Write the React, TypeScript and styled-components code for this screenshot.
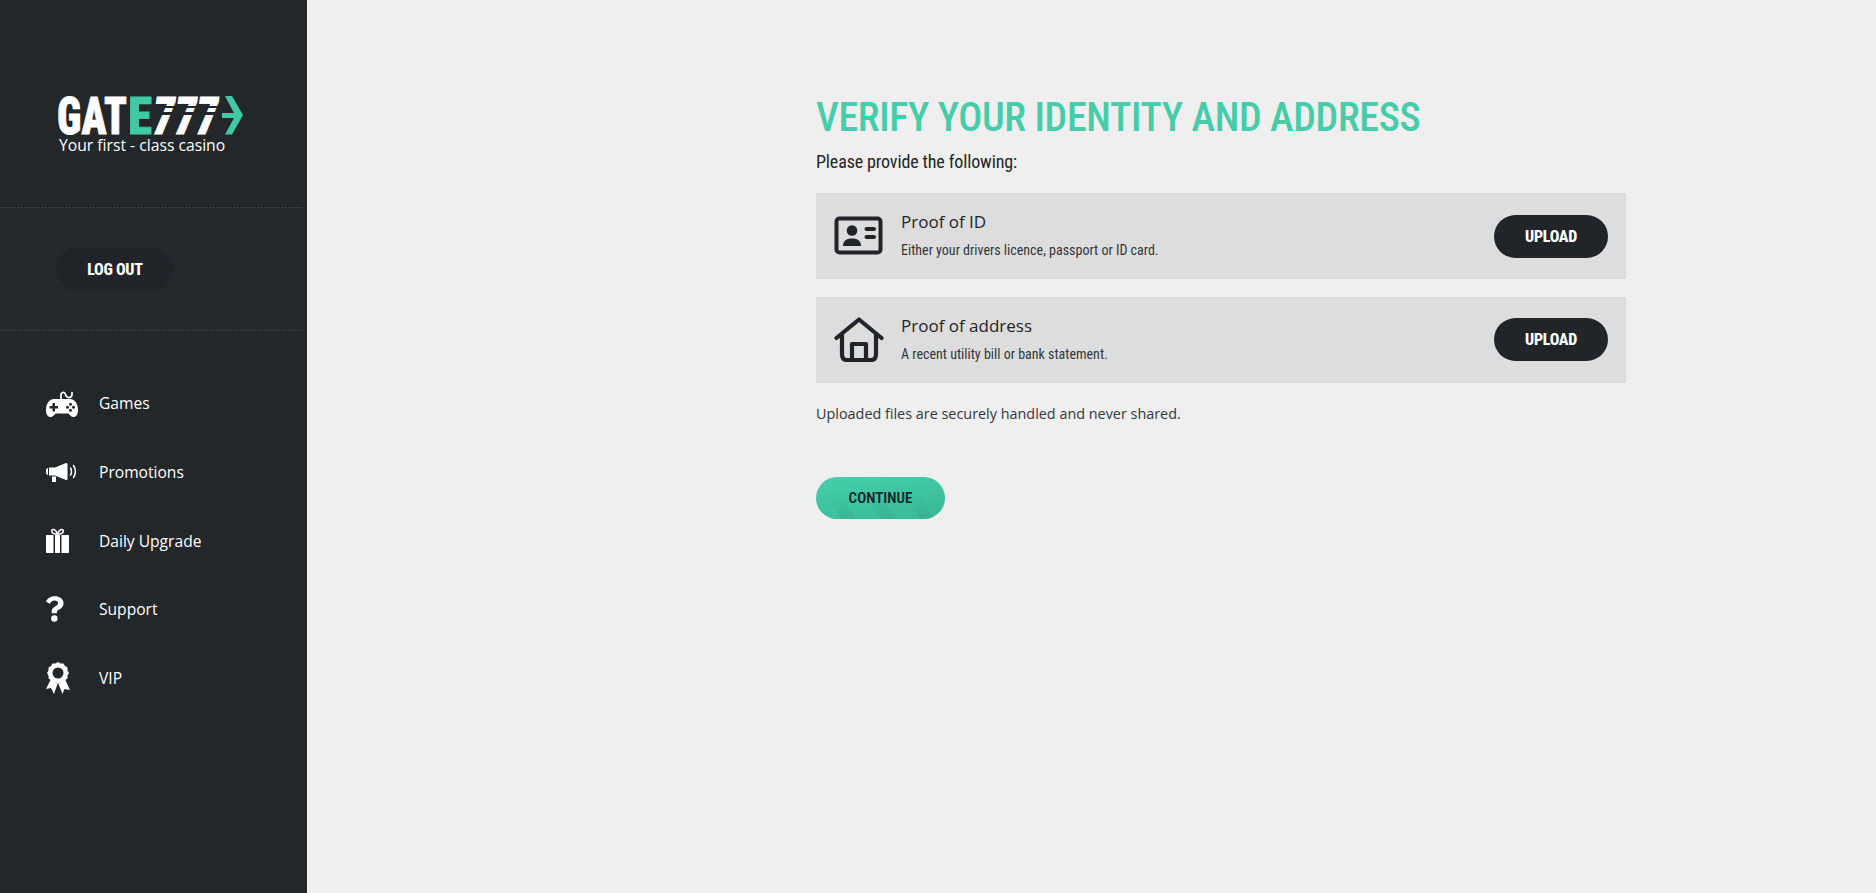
import { ReactNode } from 'react';
import styled, { createGlobalStyle } from 'styled-components';

const GlobalStyle = createGlobalStyle`
	html, body {
		margin: 0;
		padding: 0;
		height: 100%;
		background: #efefef;
		font-family: 'Open Sans', 'Noto Sans', sans-serif;
	}
	* {
		box-sizing: border-box;
	}
`;

const GamesIcon = () => (
	<svg width='32' height='27' viewBox='0 0 32 27' fill='none'>
		<path d='M15 9V4.500C15 2.500 18 1.500 19 3.500C20 6 20 7 22 7.500C24 7.800 26 7 26 4.500V2.500' stroke='#fff' strokeWidth='1.700' strokeLinecap='round' />
		<path
			fill='#fff'
			fillRule='evenodd'
			d='M8 9H24C29 9 32 14 32 20C32 24.500 30 27 27.500 27C25 27 24 25 22.500 23.500H9.500C8 25 7 27 4.500 27C2 27 0 24.500 0 20C0 14 3 9 8 9ZM6.500 13V16H3.500V18.500H6.500V21.500H9V18.500H12V16H9V13ZM24.500 12.700A1.500 1.500 0 1 0 24.500 15.700A1.500 1.500 0 1 0 24.500 12.700ZM24.500 18.700A1.500 1.500 0 1 0 24.500 21.700A1.500 1.500 0 1 0 24.500 18.700ZM21.500 15.700A1.500 1.500 0 1 0 21.500 18.700A1.500 1.500 0 1 0 21.500 15.700ZM27.500 15.700A1.500 1.500 0 1 0 27.500 18.700A1.500 1.500 0 1 0 27.500 15.700Z'
		/>
	</svg>
);

const PromotionsIcon = () => (
	<svg width='31' height='19' viewBox='0 0 31 19' fill='none'>
		<path fill='#fff' d='M0 7.500C0 6 1 5 2 5V12C1 12 0 11 0 9.500ZM3 4.500H9L20 0C21 0 21.500 0.500 21.500 1.500V15.500C21.500 16.500 21 17 20 17L9 12.500H3ZM6 13.500H10V19H6Z' />
		<path d='M24.500 5C25.800 6.800 25.800 10.200 24.500 12M27.500 2.500C30 6 30 11 27.500 14.500' stroke='#fff' strokeWidth='1.500' strokeLinecap='round' />
	</svg>
);

const GiftIcon = () => (
	<svg width='23' height='25' viewBox='0 0 23 25' fill='none'>
		<path d='M11.500 6C9 6 5.500 5.500 5.700 3C6 0.500 9.500 0.800 11.500 6C13.500 0.800 17 0.500 17.300 3C17.500 5.500 14 6 11.500 6Z' stroke='#fff' strokeWidth='1.600' />
		<path fill='#fff' d='M0.500 7H7.500V25H1.500C0.500 25 0 24.500 0 23.500V7.500C0 7.200 0.200 7 0.500 7ZM9 7H14V25H9ZM15.500 7H22.500C22.800 7 23 7.200 23 7.500V23.500C23 24.500 22.500 25 21.500 25H15.500Z' />
	</svg>
);

const SupportIcon = () => (
	<svg width='18' height='26' viewBox='0 0 19 27' fill='#fff'>
		<path d='M9.500 0C4.500 0 1.500 2.500 0 5.500L4 8C5 6 6.500 4.500 9 4.500C11 4.500 12.800 5.500 12.800 7.300C12.800 9 11.300 9.700 9.500 10.800C7.500 12 6 13.300 6 16V18H11.500V16.800C11.500 15.500 12.500 14.800 14 13.900C16.500 12.500 18.500 10.700 18.500 7.300C18.500 2.700 14 0 9.500 0Z' />
		<circle cx='8.800' cy='23.500' r='3.400' />
	</svg>
);

const VipIcon = () => (
	<svg width='24' height='32' viewBox='0 0 24 32' fill='none'>
		<path fill='#fff' d='M5 17L0 27L5 26L8 32L11.500 22ZM19 17L24 28L18.500 27L16.500 32L12.500 22Z' />
		<path
			fill='#fff'
			fillRule='evenodd'
			d='M12 0L14.600 1.500L17.500 1.500L19 4L21.500 5.500L21.500 8.500L23 11L21.500 13.500L21.500 16.500L19 18L17.500 20.500L14.600 20.500L12 22L9.400 20.500L6.500 20.500L5 18L2.500 16.500L2.500 13.500L1 11L2.500 8.500L2.500 5.500L5 4L6.500 1.500L9.400 1.500ZM12 5.500A5.500 5.500 0 1 0 12 16.500A5.500 5.500 0 1 0 12 5.500Z'
		/>
	</svg>
);

const IdCardIcon = () => (
	<svg width='50' height='40' viewBox='0 0 50 40' fill='none'>
		<rect x='2.500' y='2.500' width='44' height='34' rx='3' stroke='#212529' strokeWidth='4' />
		<circle cx='18' cy='14.500' r='5.300' fill='#212529' />
		<path d='M9 30C9 25 12 22.500 18 22.500C24 22.500 27 25 27 30Z' fill='#212529' />
		<path d='M32.500 13H40M32.500 21H40' stroke='#212529' strokeWidth='4' strokeLinecap='round' />
	</svg>
);

const HouseIcon = () => (
	<svg width='50' height='45' viewBox='0 0 50 45' fill='none' stroke='#212529' strokeWidth='4.200' strokeLinecap='round' strokeLinejoin='round'>
		<path d='M2.500 21L25 2.500L47.500 21' />
		<path d='M8 17V37C8 41 10 43 13 43H37C40 43 42 41 42 37V17' />
		<path d='M18 43V27H32V43' />
	</svg>
);

const LogoMark = () => (
	<LogoSvg width='186' height='39' viewBox='0 0 186 39'>
		<LogoLetters x='-1' y='38' textLength='70' lengthAdjust='spacingAndGlyphs' fill='#ffffff' stroke='#ffffff'>
			GAT
		</LogoLetters>
		<LogoLetters x='70' y='38' textLength='24' lengthAdjust='spacingAndGlyphs' fill='#3fcaa5' stroke='#3fcaa5'>
			E
		</LogoLetters>
		<LogoLetters x='95' y='38' textLength='65' lengthAdjust='spacingAndGlyphs' fill='#ffffff' stroke='#ffffff' $italic>
			777
		</LogoLetters>
		<rect x='94' y='10' width='70' height='2' fill='#23272a' />
		<rect x='94' y='16' width='70' height='3' fill='#23272a' />
		<path d='M167 0H174L185 19L174 38.500H167L176 22H164V17H176Z' fill='#3fcaa5' />
	</LogoSvg>
);

const menu: { label: string; icon: ReactNode }[] = [
	{ label: 'Games', icon: <GamesIcon /> },
	{ label: 'Promotions', icon: <PromotionsIcon /> },
	{ label: 'Daily Upgrade', icon: <GiftIcon /> },
	{ label: 'Support', icon: <SupportIcon /> },
	{ label: 'VIP', icon: <VipIcon /> },
];

const App = () => {
	return (
		<Page>
			<GlobalStyle />
			<Sidebar>
				<Logo>
					<LogoMark />
					<LogoTagline>Your first - class casino</LogoTagline>
				</Logo>
				<Account>
					<LogOut>LOG OUT</LogOut>
				</Account>
				<Menu>
					{menu.map((item) => (
						<MenuItem key={item.label}>
							<MenuIcon>{item.icon}</MenuIcon>
							{item.label}
						</MenuItem>
					))}
				</Menu>
			</Sidebar>
			<Main>
				<Title>VERIFY YOUR IDENTITY AND ADDRESS</Title>
				<Intro>Please provide the following:</Intro>
				<Row>
					<RowIcon>
						<IdCardIcon />
					</RowIcon>
					<RowText>
						<RowTitle>Proof of ID</RowTitle>
						<RowHint>Either your drivers licence, passport or ID card.</RowHint>
					</RowText>
					<Upload>UPLOAD</Upload>
				</Row>
				<Row>
					<RowIcon>
						<HouseIcon />
					</RowIcon>
					<RowText>
						<RowTitle>Proof of address</RowTitle>
						<RowHint>A recent utility bill or bank statement.</RowHint>
					</RowText>
					<Upload>UPLOAD</Upload>
				</Row>
				<Note>Uploaded files are securely handled and never shared.</Note>
				<Continue>CONTINUE</Continue>
			</Main>
		</Page>
	);
};

export default App;

const Page = styled.div`
	display: flex;
	height: 893px;
	overflow: hidden;
`;

const Sidebar = styled.aside`
	width: 307px;
	flex-shrink: 0;
	background-color: #23272a;
`;

const Logo = styled.div`
	height: 207px;
	padding: 96px 0 0 58px;
`;

const LogoSvg = styled.svg`
	display: block;
	overflow: visible;
`;

const LogoLetters = styled.text<{ $italic?: boolean }>`
	font-family: 'Roboto', sans-serif;
	font-stretch: 75%;
	font-weight: 900;
	font-size: 52px;
	font-style: ${(p) => (p.$italic ? 'italic' : 'normal')};
	stroke-width: 0.8px;
`;

const LogoTagline = styled.div`
	margin: 0 0 0 1px;
	font-size: 15.7px;
	line-height: 20px;
	white-space: nowrap;
	color: #ffffff;
`;

const Account = styled.div`
	width: 303px;
	height: 124px;
	padding: 40px 0 0 56px;
	background-color: #25292c;
	background-image: repeating-linear-gradient(90deg, #53575a 0 1px, transparent 1px 3px),
		repeating-linear-gradient(90deg, #53575a 0 1px, transparent 1px 3px),
		repeating-linear-gradient(180deg, #34383b 0 1px, transparent 1px 3px);
	background-size: 100% 1px, 100% 1px, 1px 100%;
	background-position: top left, bottom left, top right;
	background-repeat: no-repeat;
`;

const LogOut = styled.button`
	display: block;
	width: 118px;
	height: 44px;
	border: 0;
	border-radius: 22px;
	background-color: #212428;
	color: #ffffff;
	font-family: 'Roboto', sans-serif;
	font-stretch: 75%;
	font-weight: 800;
	font-size: 16px;
	letter-spacing: -0.3px;
`;

const Menu = styled.nav`
	display: flex;
	flex-direction: column;
	padding-top: 38px;
`;

const MenuItem = styled.a`
	display: flex;
	align-items: center;
	height: 68.7px;
	padding-left: 46px;
	font-size: 15.6px;
	color: #ffffff;
`;

const MenuIcon = styled.span`
	display: flex;
	align-items: center;
	width: 53px;
`;

const Main = styled.main`
	flex: 1;
	padding: 92px 250px 0 509px;
`;

const Title = styled.h1`
	margin: 0;
	font-family: 'Roboto', sans-serif;
	font-stretch: 75%;
	font-weight: 500;
	font-size: 40px;
	line-height: 52px;
	letter-spacing: -0.37px;
	white-space: nowrap;
	color: #46cca8;
`;

const Intro = styled.p`
	margin: 6px 0 19px;
	font-family: 'Roboto', sans-serif;
	font-stretch: 75%;
	font-weight: 400;
	font-size: 18px;
	line-height: 24px;
	letter-spacing: -0.12px;
	color: #212529;
`;

const Row = styled.div`
	display: flex;
	align-items: center;
	height: 86px;
	margin-bottom: 17.5px;
	padding: 0 18px;
	background-color: #dddddd;
`;

const RowIcon = styled.span`
	display: flex;
	justify-content: center;
	width: 50px;
	margin-right: 17px;
`;

const RowText = styled.div`
	flex: 1;
	margin-top: -2px;
`;

const RowTitle = styled.div`
	font-size: 17px;
	line-height: 24px;
	color: #212529;
`;

const RowHint = styled.div`
	margin-top: 6px;
	font-family: 'Roboto', sans-serif;
	font-stretch: 75%;
	font-size: 14px;
	line-height: 20px;
	color: #33373b;
`;

const Upload = styled.button`
	width: 114px;
	height: 43px;
	border: 0;
	border-radius: 22px;
	background-color: #212529;
	color: #ffffff;
	font-family: 'Roboto', sans-serif;
	font-stretch: 75%;
	font-weight: 800;
	font-size: 16px;
	letter-spacing: -0.3px;
`;

const Note = styled.p`
	margin: 19px 0 51px;
	font-size: 14.4px;
	line-height: 24px;
	color: #33373b;
`;

const Continue = styled.button`
	position: relative;
	display: block;
	width: 129px;
	height: 42px;
	padding: 0;
	border: 0;
	border-radius: 21px;
	overflow: hidden;
	background: linear-gradient(170deg, #46cfaa, #38b898);
	color: #15262a;
	font-family: 'Roboto', sans-serif;
	font-stretch: 75%;
	font-weight: 600;
	font-size: 15px;

	&::before {
		content: '';
		position: absolute;
		inset: 0;
		background: repeating-linear-gradient(60deg, transparent 0 22px, rgba(20, 110, 90, 0.1) 22px 34px);
		-webkit-mask-image: linear-gradient(180deg, transparent 45%, #000 100%);
		mask-image: linear-gradient(180deg, transparent 45%, #000 100%);
	}
`;
